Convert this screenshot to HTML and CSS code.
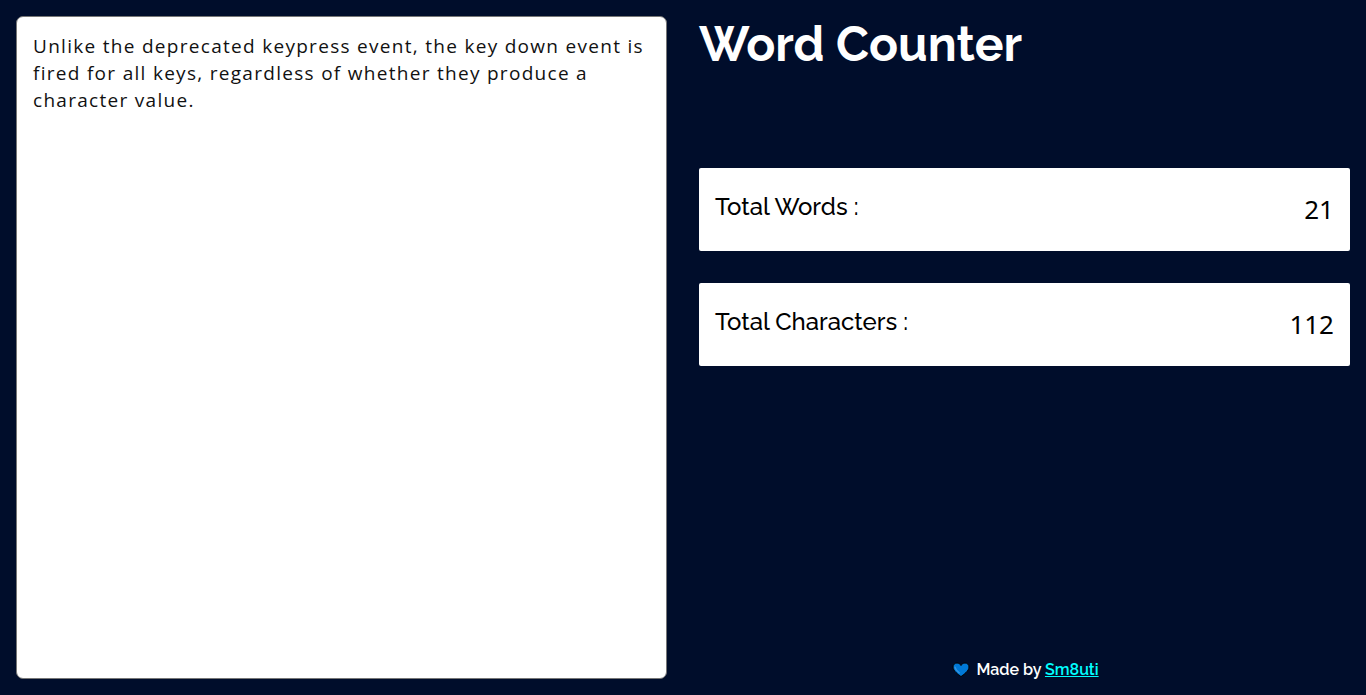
FILE: index.html
```html
<!DOCTYPE html>
<html lang="en">
<head>
<meta charset="utf-8">
<meta name="viewport" content="width=device-width, initial-scale=1">
<title>Word Counter</title>
<link rel="stylesheet" href="styles.css">
</head>
<body>
<main class="app">
  <textarea class="editor" aria-label="Text to count" spellcheck="false">Unlike the deprecated keypress event, the key down event is fired for all keys, regardless of whether they produce a character value.</textarea>
  <section class="panel">
    <h1 class="title">Word Counter</h1>
    <div class="stats">
      <div class="card">
        <h2 class="card-label">Total Words :</h2>
        <p class="card-value">21</p>
      </div>
      <div class="card">
        <h2 class="card-label">Total Characters :</h2>
        <p class="card-value">112</p>
      </div>
    </div>
    <footer class="credit">
      <svg class="heart" viewBox="0 0 20 16" aria-hidden="true">
        <path d="M11 14.6C8.4 12.4 3 9.2 3 5C3 2.5 4.8 1 7 1C8.8 1 10.2 2 11 3.5C11.8 2 13.2 1 15 1C17.2 1 19 2.5 19 5C19 9.2 13.6 12.4 11 14.6Z" fill="#0078d7" stroke="#000" stroke-width="1"/>
        <path d="M5 5.2C5.4 7.4 7 9.2 9.2 10.8" fill="none" stroke="#3a96dd" stroke-width="1.4" stroke-linecap="round"/>
      </svg>
      <span>Made by <a class="credit-link" href="#">Sm8uti</a></span>
    </footer>
  </section>
</main>
</body>
</html>
```
FILE: styles.css
```css
* {
  box-sizing: border-box;
  margin: 0;
  padding: 0;
}

body {
  background: #000d2b;
  font-family: Raleway, Lato, sans-serif;
}

.app {
  display: grid;
  grid-template-columns: 1fr 1fr;
  gap: 32px;
  min-height: 100vh;
  padding: 16px;
}

.editor {
  width: 100%;
  padding: 16px;
  border: 1px solid #767676;
  border-radius: 7px;
  outline: none;
  resize: none;
  background: #fff;
  color: #111;
  font: 19px/27px "Open Sans", sans-serif;
  letter-spacing: 0.068em;
}

.panel {
  display: flex;
  flex-direction: column;
}

.title {
  color: #fff;
  font-size: 48px;
  font-weight: 700;
  line-height: 56px;
}

.stats {
  display: grid;
  gap: 32px;
  margin-top: 96px;
}

.card {
  display: flex;
  justify-content: space-between;
  min-height: 83px;
  padding: 24px 16px;
  border-radius: 2px;
  background: #fff;
  color: #000;
}

.card-label {
  font-size: 24px;
  font-weight: 500;
  line-height: 30px;
}

.card-value {
  font: 400 26px/35px "Noto Sans", sans-serif;
}

.credit {
  display: flex;
  align-items: center;
  justify-content: center;
  gap: 6px;
  margin-top: auto;
  color: #fff;
  font-size: 16px;
  font-weight: 600;
  line-height: 19px;
}

.heart {
  width: 20px;
  height: 16px;
}

.credit-link {
  color: #00ffff;
}
```
